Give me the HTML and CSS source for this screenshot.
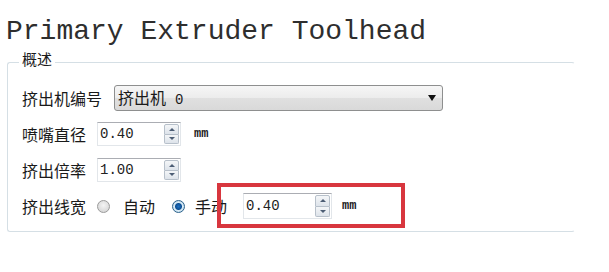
FILE: index.html
```html
<!DOCTYPE html>
<html lang="zh-CN">
<head>
    <meta charset="UTF-8">
    <meta name="viewport" content="width=device-width, initial-scale=1.0">
    <title>Primary Extruder Toolhead</title>
    <link rel="stylesheet" href="styles.css">
</head>
<body>
    <h1 class="title">Primary Extruder Toolhead</h1>

    <fieldset class="group">
        <legend>概述</legend>

        <div class="row">
            <span class="label">挤出机编号</span>
            <div class="combo">
                <span class="combo-text">挤出机<span class="num">0</span></span>
                <span class="combo-arrow"></span>
            </div>
        </div>

        <div class="row">
            <span class="label">喷嘴直径</span>
            <div class="spin">
                <span class="spin-value">0.40</span>
                <span class="spin-btns"><span class="up"></span><span class="down"></span></span>
            </div>
            <span class="unit">mm</span>
        </div>

        <div class="row">
            <span class="label">挤出倍率</span>
            <div class="spin">
                <span class="spin-value">1.00</span>
                <span class="spin-btns"><span class="up"></span><span class="down"></span></span>
            </div>
        </div>

        <div class="row">
            <span class="label">挤出线宽</span>
            <span class="radio"></span>
            <span class="radio-text">自动</span>
            <span class="radio checked"></span>
            <span class="radio-text short">手动</span>
            <div class="spin spin-wide">
                <span class="spin-value">0.40</span>
                <span class="spin-btns"><span class="up"></span><span class="down"></span></span>
            </div>
            <span class="unit unit-near">mm</span>
        </div>
    </fieldset>

    <!-- annotation box drawn over the screenshot -->
    <div class="highlight"></div>
</body>
</html>
```

FILE: styles.css
```css
body {
    margin: 0;
    padding: 16px 0 0 7px;
    background-color: #fff;
    color: #1a1a1a;
    font-family: "Noto Sans CJK SC", "Noto Sans", sans-serif;
}

.title {
    margin: 0 0 0 -1px;
    font-family: "Liberation Mono", monospace;
    font-size: 28px;
    line-height: 32px;
    font-weight: normal;
    color: #2e2e2e;
}

.group {
    box-sizing: border-box;
    width: 568px;
    margin: 2px 0 0;
    padding: 6px 0 7px 14px;
    border: 1px solid #d5dfe5;
    border-right-color: #fff;
    border-radius: 3px;
}

.group legend {
    margin-left: -3px;
    padding: 0 3px 6px;
    font-size: 15px;
    line-height: 18px;
    color: #1a1a1a;
}

.row {
    display: flex;
    align-items: center;
    height: 36px;
}

.label {
    font-size: 16px;
    line-height: 20px;
    margin-right: 11px;
}

.combo {
    box-sizing: border-box;
    display: flex;
    align-items: center;
    width: 329px;
    height: 26px;
    margin-left: 1px;
    padding-left: 3px;
    border: 1px solid #8e8f8f;
    border-radius: 3px;
    background: linear-gradient(#f6f6f6, #ececec 50%, #e0e0e0 51%, #d9d9d9);
}

.combo-text {
    font-size: 16px;
    line-height: 20px;
}

.combo-text .num {
    margin-left: 9px;
    font-family: "Liberation Mono", monospace;
    font-size: 14px;
}

.combo-arrow {
    margin-left: auto;
    margin-right: 6px;
    border-top: 6px solid #111;
    border-left: 4px solid transparent;
    border-right: 4px solid transparent;
}

.spin {
    box-sizing: border-box;
    display: flex;
    align-items: center;
    width: 84px;
    height: 24px;
    border: 1px solid #e2e6ea;
    border-top-color: #abadb3;
    background-color: #fff;
}

.spin-wide {
    width: 89px;
    height: 26px;
}

.spin-value {
    padding-left: 2px;
    font-family: "Liberation Mono", monospace;
    font-size: 14px;
    color: #222;
}

.spin-btns {
    display: flex;
    flex-direction: column;
    width: 15px;
    height: calc(100% - 2px);
    margin: 0 1px 0 auto;
}

.spin-btns span {
    flex: 1;
    display: flex;
    align-items: center;
    justify-content: center;
    border: 1px solid #b7c0ca;
    background: linear-gradient(#f4f6f8, #dde3ea);
}

.spin-btns .up {
    border-radius: 2px 2px 0 0;
}

.spin-btns .down {
    border-top: none;
    border-radius: 0 0 2px 2px;
}

.spin-btns .up::after,
.spin-btns .down::after {
    content: "";
    border-left: 3px solid transparent;
    border-right: 3px solid transparent;
}

.spin-btns .up::after {
    border-bottom: 3px solid #4c5d74;
}

.spin-btns .down::after {
    border-top: 3px solid #4c5d74;
}

.unit {
    margin-left: 13px;
    font-family: "Liberation Mono", monospace;
    font-size: 12px;
    font-weight: bold;
    color: #222;
}

.unit-near {
    margin-left: 10px;
}

.radio {
    box-sizing: border-box;
    width: 13px;
    height: 13px;
    border: 1px solid #9a9a9a;
    border-radius: 50%;
    background: radial-gradient(circle at 50% 40%, #f4f4f4, #cfcfcf);
}

.radio.checked {
    margin-left: 17px;
    border-color: #2c628b;
    background: radial-gradient(circle, #1d70c2 0, #0d4f94 3px, #d9ecf7 4px, #c0d8e8 6px);
}

.radio-text {
    margin-left: 13px;
    font-size: 16px;
    line-height: 20px;
}

.radio-text.short {
    margin-left: 10px;
    margin-right: 16px;
}

.highlight {
    position: absolute;
    left: 217px;
    top: 183px;
    box-sizing: border-box;
    width: 188px;
    height: 45px;
    border: 4px solid #d8363e;
}
```
